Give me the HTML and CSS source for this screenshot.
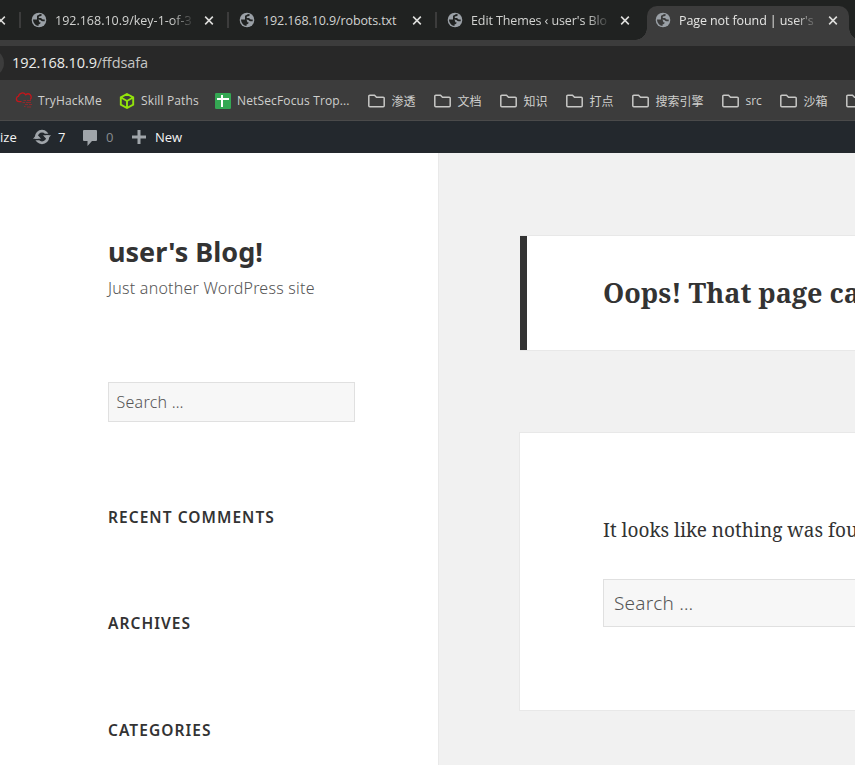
FILE: index.html
```html
<!DOCTYPE html>
<html lang="en">
<head>
<meta charset="utf-8">
<title>Page not found | user's Blog!</title>
<link rel="stylesheet" href="styles.css">
</head>
<body>
<svg class="defs" aria-hidden="true">
  <symbol id="globe" viewBox="0 0 16 16"><circle cx="8" cy="8" r="7.300" fill="#9aa0a6"/><path d="M2 7.600h3.200c1.800 0 3 .5 3 1.700v1h1.300c.3 1.400-.9 1.900-2 2.200v1.500C5.200 14 2.200 11.800 2 7.600zM9 2l1.900.5c-.1 1.200-.8 1.500-1.600 1.700l-1.500.3v1.400h1.900c1.100 0 1.200 1.500 2.300 1.500h1.700v1.900h-2.200c-1.500 0-1.700-1.400-2.700-1.500H6V4.300C6 3.100 7.800 3.300 9 2z" fill="var(--hole)"/></symbol>
  <symbol id="close" viewBox="0 0 8 8"><path d="M.6.6l6.800 6.800M7.400.6L.6 7.400" stroke="#dededc" stroke-width="1.400"/></symbol>
  <symbol id="folder" viewBox="0 0 18 14"><path d="M1.800 1.200h4.700l2 2h6.700a1 1 0 0 1 1 1v7.600a1 1 0 0 1-1 1H1.800a1 1 0 0 1-1-1V2.200a1 1 0 0 1 1-1z" fill="none" stroke="#c8c8c6" stroke-width="1.500"/></symbol>
</svg>
<header class="tabs">
  <div class="tab tab-first"><svg class="x"><use href="#close"/></svg></div>
  <div class="tab"><svg class="globe"><use href="#globe"/></svg><span class="label t1">192.168.10.9/key-1-of-3</span><svg class="x"><use href="#close"/></svg></div>
  <div class="tab"><svg class="globe"><use href="#globe"/></svg><span class="label t2">192.168.10.9/robots.txt</span><svg class="x"><use href="#close"/></svg></div>
  <div class="tab"><svg class="globe"><use href="#globe"/></svg><span class="label t3">Edit Themes ‹ user's Blo</span><svg class="x"><use href="#close"/></svg></div>
  <div class="tab active"><svg class="globe"><use href="#globe"/></svg><span class="label t4">Page not found | user's B</span><svg class="x"><use href="#close"/></svg></div>
</header>
<div class="address"><span>192.168.10.9<span class="path">/ffdsafa</span></span></div>
<nav class="bookmarks">
  <a class="b1"><svg class="cloud" viewBox="0 0 18 17"><path d="M6.500 9.700H4A2.800 2.800 0 0 1 3.500 4.200 4 4 0 0 1 10.800 2.800 3.200 3.200 0 0 1 15.200 7.500" fill="none" stroke="#c4161b" stroke-width="1.300"/><path d="M8.500 8.500h2.500M12 8.500h4M7.500 10.500h2.500M11 10.500h5M10 12.500h3M14 12.500h3M9 14.500h1.500M12 15h4" stroke="#8a2a2c" stroke-width="1.100"/></svg><span>TryHackMe</span></a>
  <a class="b2"><svg class="cube" viewBox="0 0 16 16"><path d="M8 1l6.200 3.300v7.400L8 15l-6.200-3.300V4.300zM2 4.500L8 8l6-3.500M8 8v7" fill="none" stroke="#93e30b" stroke-width="1.900"/></svg><span>Skill Paths</span></a>
  <a class="b3"><svg class="sheet" viewBox="0 0 16 16"><rect width="16" height="16" rx="1.200" fill="#34a853"/><path d="M2 6h12M7 2v12" stroke="#fff" stroke-width="2"/></svg><span>NetSecFocus Trop...</span></a>
  <a class="f"><svg class="folder"><use href="#folder"/></svg><span>渗透</span></a>
  <a class="f"><svg class="folder"><use href="#folder"/></svg><span>文档</span></a>
  <a class="f"><svg class="folder"><use href="#folder"/></svg><span>知识</span></a>
  <a class="f"><svg class="folder"><use href="#folder"/></svg><span>打点</span></a>
  <a class="f wide"><svg class="folder"><use href="#folder"/></svg><span>搜索引擎</span></a>
  <a class="f src"><svg class="folder"><use href="#folder"/></svg><span>src</span></a>
  <a class="f"><svg class="folder"><use href="#folder"/></svg><span>沙箱</span></a>
  <a class="f"><svg class="folder"><use href="#folder"/></svg></a>
</nav>
<div class="adminbar">
  <span class="customize">ize</span>
  <svg class="update" viewBox="0 0 18 16"><circle cx="9" cy="8" r="5.800" fill="none" stroke="#a0a5aa" stroke-width="2.800"/><path d="M0 10.500h6M18 5.500h-6" stroke="#23282d" stroke-width="1.400"/><path d="M0 9.800h8L4 5.200zM18 6.200h-8l4 4.600z" fill="#a0a5aa"/></svg>
  <span class="count">7</span>
  <svg class="comment" viewBox="0 0 14 16"><path d="M1 0h12a1 1 0 0 1 1 1v9a1 1 0 0 1-1 1H9l-4.500 5v-5H1a1 1 0 0 1-1-1V1a1 1 0 0 1 1-1z" fill="#a0a5aa"/></svg>
  <span class="zero">0</span>
  <svg class="plus" viewBox="0 0 14 14"><path d="M0 7h14M7 0v14" stroke="#a0a5aa" stroke-width="3"/></svg>
  <span class="new">New</span>
</div>
<main class="page">
  <aside class="sidebar">
    <h1><span>user's Blog!</span></h1>
    <p class="tagline"><span>Just another WordPress site</span></p>
    <div class="search small"><span>Search …</span></div>
    <h2>Recent Comments</h2>
    <h2>Archives</h2>
    <h2>Categories</h2>
  </aside>
  <section class="content">
    <div class="card title"><span>Oops! That page can’t be found.</span></div>
    <div class="card body"><p>It looks like nothing was found at this location.</p><div class="search large"><span>Search …</span></div></div>
  </section>
</main>
</body>
</html>
```
FILE: styles.css
```css
* { box-sizing: border-box; }
body { margin: 0; width: 855px; height: 765px; overflow: hidden; background: #fff; font-family: "Open Sans", "Noto Sans CJK SC", sans-serif; }
.defs { position: absolute; width: 0; height: 0; }
svg { flex: none; display: block; }
span { white-space: nowrap; }

.tabs { --hole: #202221; display: flex; height: 40px; background: #202221; overflow: hidden; font-size: 12.500px; letter-spacing: -.1px; color: #d2d3d1; }
.tab { position: relative; display: flex; align-items: center; flex: none; width: 208px; height: 40px; padding-left: 12px; }
.tab:not(.active)::before { content: ""; position: absolute; left: 0; top: 12px; width: 2px; height: 16px; background: #3c3c3c; }
.tab-first { width: 19px; padding: 0; }
.tab-first::before { display: none; }
.tab-first .x { margin-left: -4px; }
.globe { width: 16px; height: 16px; }
.label { width: 139px; margin-left: 8px; padding-top: 2px; overflow: hidden; line-height: 20px; -webkit-mask-image: linear-gradient(90deg, #000 116px, transparent 140px); mask-image: linear-gradient(90deg, #000 116px, transparent 140px); }
.t1 { letter-spacing: 0; }
.t2 { -webkit-mask-image: none; mask-image: none; }
.x { width: 10px; height: 9px; margin-left: 10px; }
.active { --hole: #3c3c3c; width: 202px; margin-left: 4px; height: 34px; margin-top: 6px; padding: 0 0 6px 8px; background: #3c3c3c; border-radius: 10px 10px 0 0; color: #e6e6e4; }
.active::before, .active::after { content: ""; position: absolute; bottom: 0; width: 12px; height: 12px; }
.active::before { left: -12px; background: radial-gradient(circle at 0 0, transparent 11.500px, #3c3c3c 12px); }
.active::after { right: -12px; background: radial-gradient(circle at 100% 0, transparent 11.500px, #3c3c3c 12px); }

.address { position: relative; height: 40px; border-top: 6px solid #3c3c3c; background: #282828; overflow: hidden; padding-left: 12px; font-size: 14.500px; letter-spacing: -.1px; line-height: 33px; color: #ececea; }
.address::before { content: ""; position: absolute; left: -24px; top: 3px; width: 28px; height: 28px; border-radius: 50%; background: #3c3c3c; }
.path { color: #c6c6c4; }

.bookmarks { display: flex; height: 41px; background: #3c3c3c; border-bottom: 1px solid #4a4a4a; overflow: hidden; font-size: 12px; color: #cfcfcd; }
.bookmarks a { display: flex; align-items: center; flex: none; height: 41px; }
.b1, .b2, .b3 { letter-spacing: .14px; }
.b1 { width: 104px; margin-left: 15px; }
.cloud { width: 18px; height: 17px; margin-right: 5px; }
.b2 { width: 96px; }
.cube { width: 16px; height: 16px; margin-right: 6px; }
.b3 { width: 152.500px; }
.sheet { width: 16px; height: 16px; margin-right: 6px; }
.f { width: 66px; }
.folder { width: 18px; height: 14px; margin-right: 6px; }
.wide { width: 90px; }
.src { width: 58px; }

.adminbar { display: flex; align-items: center; height: 32px; background: #23282d; color: #f4f4f4; font-size: 13px; }
.customize { width: 33px; }
.update { width: 18px; height: 16px; }
.count { width: 25px; margin-left: 7px; }
.comment { width: 14px; height: 16px; margin-top: 2px; }
.zero { width: 26px; margin-left: 9px; color: #888c90; }
.plus { width: 14px; height: 14px; }
.new { margin-left: 9px; }

.page { display: flex; height: 612px; font-family: "Noto Sans", sans-serif; color: #333; }
.sidebar { flex: none; width: 438px; padding: 81px 83px 0 108px; }
h1 { margin: 0; font-size: 27px; line-height: 36px; font-weight: 700; }
.tagline { margin: 6px 0 0; font-size: 16px; line-height: 24px; font-weight: 300; letter-spacing: .23px; color: #555; }
.search { display: flex; align-items: center; background: #f7f7f7; border: 1px solid #e0e0e0; color: #555; font-weight: 300; letter-spacing: .25px; }
.small { width: 247px; height: 40px; margin: 82px 0 83px; padding-left: 7.500px; font-size: 16px; }
h2 { margin: 0 0 82.400px; font-size: 15.500px; line-height: 24px; font-weight: 650; letter-spacing: 1.05px; text-transform: uppercase; }
h2:last-child { padding-top: .4px; }
.content { flex: 1; min-width: 0; padding: 82px 0 0 81px; background: #f1f1f1; border-left: 1px solid #e9e9e9; overflow: hidden; }
.card { width: 500px; background: #fff; border: 1px solid #e8e8e8; font-family: "Noto Serif", "Droid Serif", "Liberation Serif", serif; }
.title { display: flex; align-items: center; height: 116px; border-left: 0; padding-bottom: 2px; font-size: 27px; font-weight: 700; }
.title::before { content: ""; flex: none; align-self: stretch; width: 7px; margin: 0 76px -2px 0; background: #333; }
.body { height: 279px; margin-top: 81px; margin-left: -1px; padding: 80px 0 0 83px; }
.body p { margin: 0; font-size: 19px; line-height: 34px; white-space: nowrap; }
.large { width: 400px; height: 48px; margin-top: 32px; padding-left: 10px; font: 300 19px "Noto Sans", sans-serif; }
```
